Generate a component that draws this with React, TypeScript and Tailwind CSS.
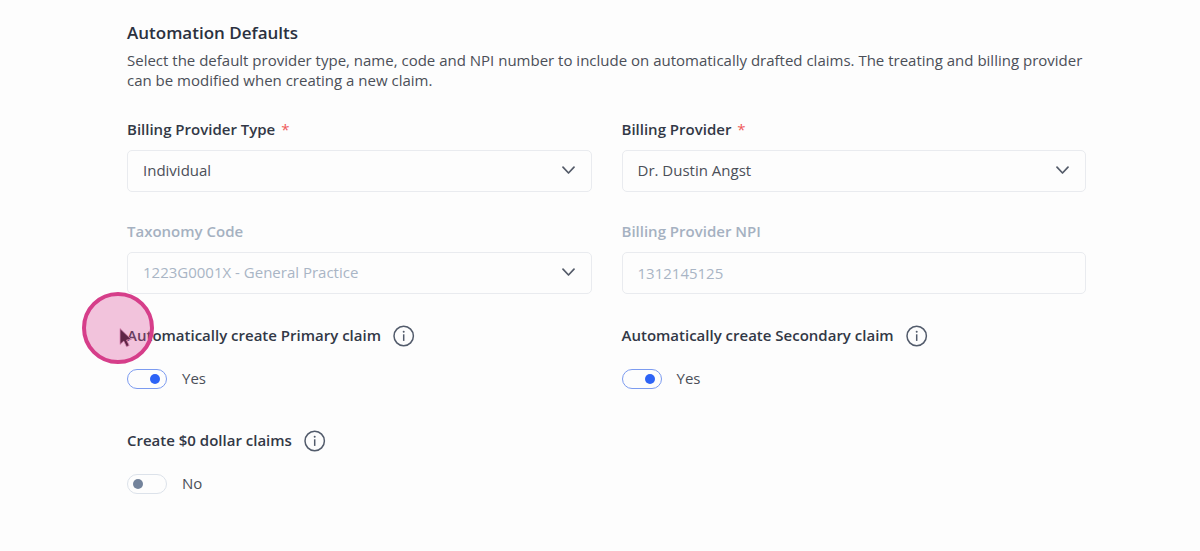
import { useState } from 'react';
import type { ReactNode } from 'react';

interface FieldProps {
  id: string;
  label: string;
  required?: boolean;
  disabled?: boolean;
  children: ReactNode;
}

function Field({ id, label, required, disabled, children }: FieldProps) {
  return (
    <div>
      <label
        htmlFor={id}
        className={`block text-[15px] leading-5 font-semibold ${disabled ? 'text-[#a5b1c1]' : 'text-[#323846]'}`}
      >
        {label}
        {required && <span className="ml-1.5 font-normal text-[#ef5a5a]">*</span>}
      </label>
      <div className="relative mt-[11px]">{children}</div>
    </div>
  );
}

interface SelectFieldProps {
  id: string;
  label: string;
  options: string[];
  required?: boolean;
  disabled?: boolean;
}

function SelectField({ id, label, options, required, disabled }: SelectFieldProps) {
  return (
    <Field id={id} label={label} required={required} disabled={disabled}>
      <select
        id={id}
        required={required}
        disabled={disabled}
        className="block h-[42px] w-full appearance-none rounded-[5px] border border-[#e9ebef] bg-[#fdfdfd] pr-12 pb-0.5 pl-[15px] text-[15px] text-[#4b4f58] opacity-100 disabled:text-[#a9b5c5]"
      >
        {options.map(option => (
          <option key={option}>{option}</option>
        ))}
      </select>
      <svg
        viewBox="0 0 14 8"
        className="pointer-events-none absolute top-4 right-4 h-2 w-3.5"
        fill="none"
        stroke="#545b69"
        strokeWidth="1.7"
        strokeLinecap="round"
        strokeLinejoin="round"
        aria-hidden="true"
      >
        <path d="M1 1.2 6.5 7 12 1.2" />
      </svg>
    </Field>
  );
}

function InfoIcon() {
  return (
    <svg viewBox="0 0 22 22" className="size-[22px]" fill="none" stroke="#525b6b" aria-hidden="true">
      <circle cx="10.7" cy="11" r="9.7" strokeWidth="1.5" />
      <path d="M10.7 9.3v6.6" strokeWidth="1.5" />
      <circle cx="10.7" cy="6.7" r="1" fill="#525b6b" stroke="none" />
    </svg>
  );
}

/* Highlight ring with the mouse pointer in it */
function PointerHighlight() {
  return (
    <svg
      viewBox="0 0 72 72"
      className="pointer-events-none absolute -top-8 -left-[45px] size-[72px]"
      aria-hidden="true"
    >
      <path
        d="M38 36.5v16l3.8-3.4 2.7 5.6 2.7-1.2-2.6-5.5 4.8-.5z"
        fill="#25151f"
        stroke="#d9a4c2"
        strokeWidth="0.8"
      />
      <circle cx="36" cy="36" r="34" fill="#dc4a98" fillOpacity="0.32" stroke="#d63e8a" strokeWidth="4" />
    </svg>
  );
}

interface ToggleFieldProps {
  id: string;
  label: string;
  defaultOn?: boolean;
  children?: ReactNode;
}

function ToggleField({ id, label, defaultOn = false, children }: ToggleFieldProps) {
  const [on, setOn] = useState(defaultOn);

  return (
    <div>
      <div className="relative flex h-6 items-center gap-3">
        <label htmlFor={id} className="pb-0.5 text-[15px] leading-5 font-semibold text-[#323846]">
          {label}
        </label>
        <button type="button" aria-label={`About: ${label}`}>
          <InfoIcon />
        </button>
        {children}
      </div>
      <div className="mt-5 flex h-[22px] items-center gap-[15px]">
        <span className="relative block h-5 w-10">
          <input
            id={id}
            type="checkbox"
            role="switch"
            checked={on}
            onChange={e => setOn(e.target.checked)}
            className="peer block h-5 w-10 cursor-pointer appearance-none rounded-full border border-[#dce2ea] bg-[#fdfdfd] checked:border-[#7c9bf0]"
          />
          <span className="pointer-events-none absolute top-[5px] left-1.5 size-2.5 rounded-full bg-[#73839b] peer-checked:left-[23px] peer-checked:bg-[#2d63f6]" />
        </span>
        <span className="pb-0.5 text-[15px] leading-5 text-[#4b4f58]">{on ? 'Yes' : 'No'}</span>
      </div>
    </div>
  );
}

export default function App() {
  return (
    <main className="min-h-screen bg-[#fdfdfd] pt-[21px] pr-[114px] pb-10 pl-[127px] font-['Open_Sans',sans-serif]">
      <h1 className="text-[17px] leading-6 font-semibold text-[#2b3140]">Automation Defaults</h1>
      <p className="mt-[5px] text-[15px] leading-5 text-[#4b4f58]">
        Select the default provider type, name, code and NPI number to include on automatically drafted claims. The
        treating and billing provider can be modified when creating a new claim.
      </p>

      <form className="mt-[29px]">
        <div className="grid grid-cols-2 gap-x-[30px] gap-y-[29px]">
          <SelectField id="provider-type" label="Billing Provider Type" options={['Individual']} required />
          <SelectField id="provider" label="Billing Provider" options={['Dr. Dustin Angst']} required />
          <SelectField id="taxonomy" label="Taxonomy Code" options={['1223G0001X - General Practice']} disabled />
          <Field id="npi" label="Billing Provider NPI" disabled>
            <input
              id="npi"
              type="text"
              disabled
              defaultValue="1312145125"
              className="block h-[42px] w-full rounded-[5px] border border-[#e9ebef] bg-[#fdfdfd] px-[15px] text-[15px] text-[#a9b5c5]"
            />
          </Field>
        </div>

        <div className="mt-[30px] grid grid-cols-2 gap-x-[30px] gap-y-[39px]">
          <ToggleField id="primary" label="Automatically create Primary claim" defaultOn>
            <PointerHighlight />
          </ToggleField>
          <ToggleField id="secondary" label="Automatically create Secondary claim" defaultOn />
          <ToggleField id="zero-dollar" label="Create $0 dollar claims" />
        </div>
      </form>
    </main>
  );
}
